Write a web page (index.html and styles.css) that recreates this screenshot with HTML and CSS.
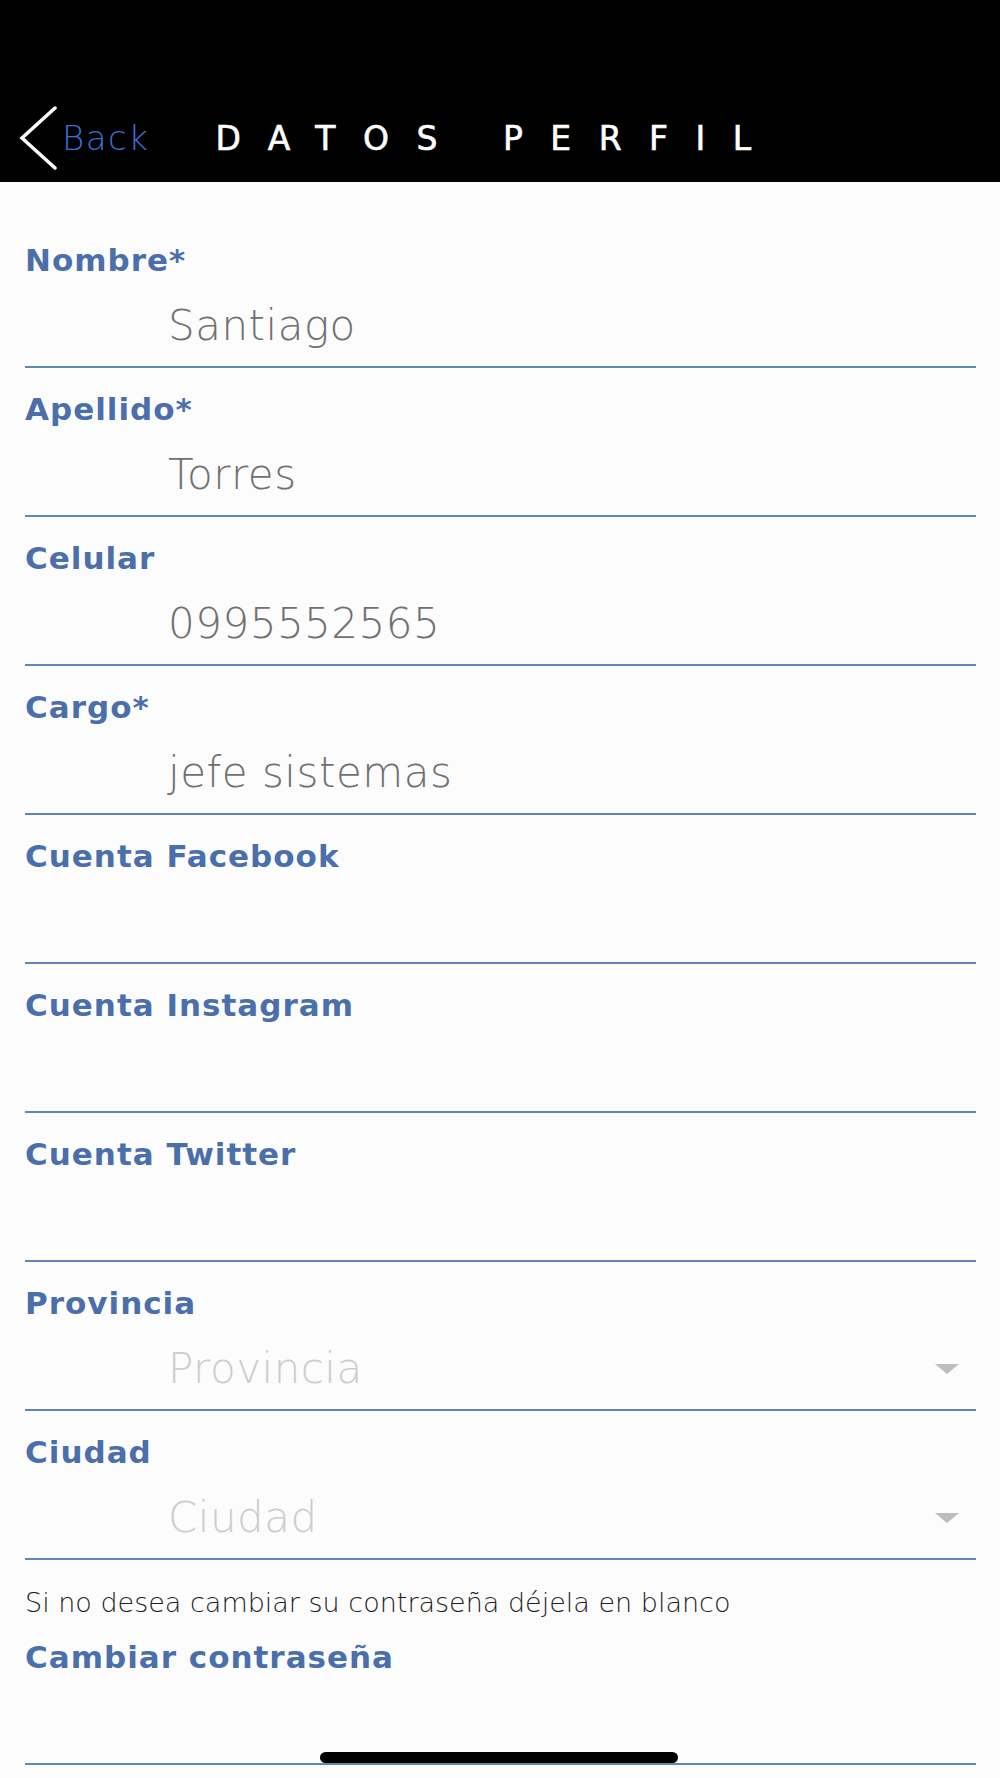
FILE: index.html
```html
<!DOCTYPE html>
<html>
  <head>
    <meta charset="utf-8" />
    <link rel="stylesheet" href="styles.css">
  </head>
  <body>
    <div class="topbar">
      <div class="back">
        <svg class="back-icon" width="40" height="64" viewBox="0 0 40 64">
          <polyline points="37,2 4,32 37,62" />
        </svg>
        <span class="back-text">Back</span>
      </div>
      <h1 class="title">DATOS PERFIL</h1>
    </div>

    <div class="form">
      <div class="field">
        <label class="field-label">Nombre*</label>
        <div class="field-value">Santiago</div>
      </div>
      <div class="field">
        <label class="field-label">Apellido*</label>
        <div class="field-value">Torres</div>
      </div>
      <div class="field">
        <label class="field-label">Celular</label>
        <div class="field-value">0995552565</div>
      </div>
      <div class="field">
        <label class="field-label">Cargo*</label>
        <div class="field-value">jefe sistemas</div>
      </div>
      <div class="field">
        <label class="field-label">Cuenta Facebook</label>
        <div class="field-value"></div>
      </div>
      <div class="field">
        <label class="field-label">Cuenta Instagram</label>
        <div class="field-value"></div>
      </div>
      <div class="field">
        <label class="field-label">Cuenta Twitter</label>
        <div class="field-value"></div>
      </div>
      <div class="field">
        <label class="field-label">Provincia</label>
        <div class="field-value select">
          <span class="placeholder">Provincia</span>
          <span class="caret"></span>
        </div>
      </div>
      <div class="field">
        <label class="field-label">Ciudad</label>
        <div class="field-value select">
          <span class="placeholder">Ciudad</span>
          <span class="caret"></span>
        </div>
      </div>

      <p class="note">Si no desea cambiar su contraseña déjela en blanco</p>

      <div class="field">
        <label class="field-label">Cambiar contraseña</label>
        <div class="field-value"></div>
      </div>
    </div>

    <div class="home-indicator"></div>
  </body>
</html>
```

FILE: styles.css
```css
:root {
  --bg-page: #fcfcfc;
  --bg-bar: #000000;
  --label-color: #4a6fab;
  --line-color: #5f86b9;
  --value-color: #707070;
  --placeholder-color: #cdcdcd;
  --link-color: #3d6fd6;
  --note-color: #1e1e1e;
}

body {
  margin: 0;
  background: var(--bg-page);
  font-family: "DejaVu Sans", "Liberation Sans", sans-serif;
}

.topbar {
  height: 182px;
  box-sizing: border-box;
  padding: 94px 0 0 18px;
  background: var(--bg-bar);
  display: flex;
  align-items: center;
}
.back {
  display: flex;
  align-items: center;
  gap: 4px;
}
.back-icon polyline {
  fill: none;
  stroke: #ffffff;
  stroke-width: 3.5;
  stroke-linecap: round;
  stroke-linejoin: miter;
}
.back-text {
  font-size: 34px;
  line-height: 1;
  font-weight: 200;
  letter-spacing: 1.5px;
  color: var(--link-color);
}
.title {
  margin: 0 0 0 66px;
  font-size: 33px;
  line-height: 1;
  font-weight: normal;
  letter-spacing: 27.5px;
  color: #ffffff;
  -webkit-text-stroke: 0.6px #ffffff;
}

.form {
  padding: 37px 24px 0 25px;
}
.field {
  height: 149px;
  box-sizing: border-box;
  padding-top: 26px;
  border-bottom: 2px solid var(--line-color);
}
.field-label {
  display: block;
  font-size: 31px;
  line-height: 1;
  font-weight: bold;
  letter-spacing: 1px;
  color: var(--label-color);
}
.field-value {
  margin-top: 29px;
  padding-left: 143px;
  height: 41px;
  font-size: 42px;
  line-height: 41px;
  font-weight: 200;
  letter-spacing: 0.5px;
  color: var(--value-color);
}
.field-value.select {
  display: flex;
  align-items: center;
  justify-content: space-between;
  padding-right: 17px;
}
.placeholder {
  color: var(--placeholder-color);
}
.caret {
  width: 0;
  height: 0;
  margin-top: 0;
  border-left: 12px solid transparent;
  border-right: 12px solid transparent;
  border-top: 10px solid #bdbdbd;
}

.note {
  margin: 30px 0 0;
  font-size: 27px;
  line-height: 26px;
  font-weight: 200;
  color: var(--note-color);
}

.home-indicator {
  position: fixed;
  left: 320px;
  bottom: 15px;
  width: 358px;
  height: 11px;
  border-radius: 6px;
  background: #000000;
}
```
